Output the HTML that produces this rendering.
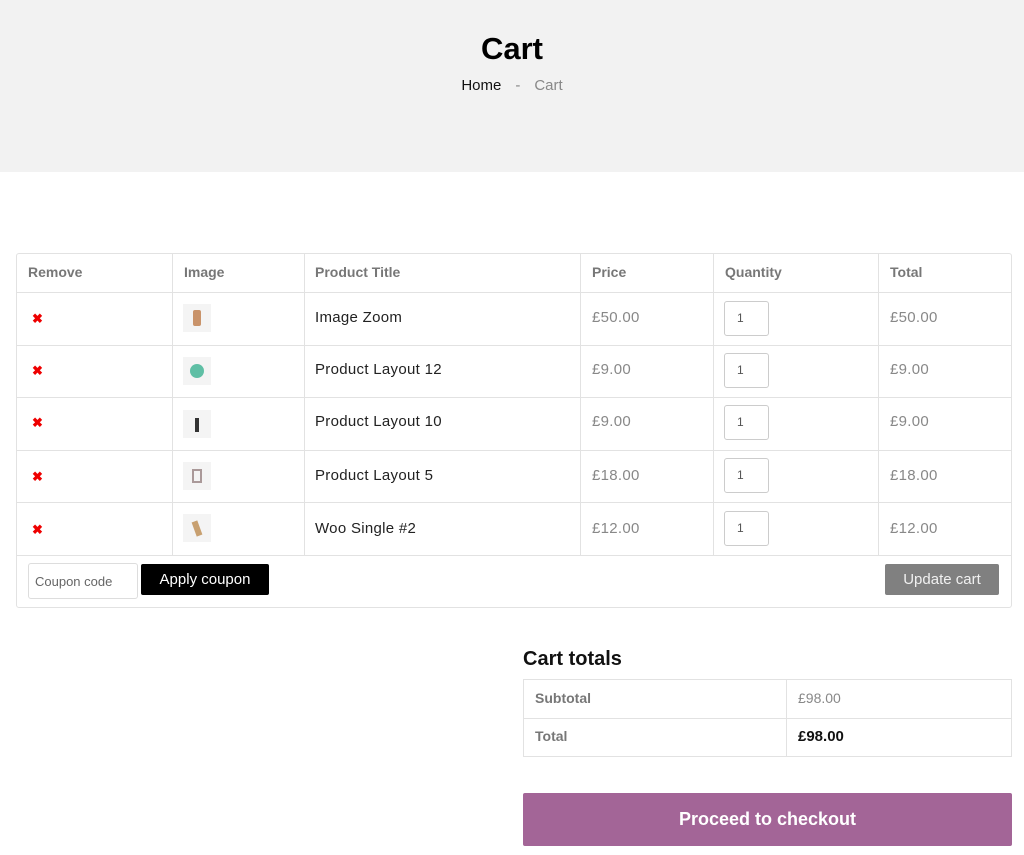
<!DOCTYPE html>
<html><head><style>
*{box-sizing:border-box;margin:0;padding:0}
body{width:1024px;height:855px;background:#fff;font-family:"Liberation Sans",sans-serif;color:#111;position:relative;overflow:hidden}
.hero{position:absolute;left:0;top:0;width:1024px;height:172px;background:#f2f2f2;text-align:center}
.hero h1{position:absolute;top:31px;width:100%;font-size:31px;font-weight:bold;color:#000}
.bc{position:absolute;top:77px;width:100%;font-size:15px}
.bc .s{color:#888;margin:0 14px}
.bc .c{color:#888}
.a{position:absolute}
.tbl{left:16px;top:253px;width:996px;height:355px;border:1px solid #e2e2e2;border-radius:3px}
.hl{position:absolute;height:1px;background:#e2e2e2}
.vl{position:absolute;width:1px;background:#e2e2e2}
.th{position:absolute;font-size:14px;font-weight:bold;color:#777;top:264px}
.td{position:absolute;font-size:15px;color:#222;letter-spacing:0.3px}
.g{color:#888}
.x{position:absolute;color:#e00;font-weight:bold;font-size:13px;left:32px}
.img{position:absolute;left:183px;width:28px;height:28px;background:#f4f4f4}
.q{position:absolute;left:724px;width:45px;height:35px;border:1px solid #ccc;border-radius:3px;font-size:12px;padding:9px 0 0 12px;color:#555}
</style></head><body>
<div class="hero"><h1>Cart</h1><div class="bc"><span>Home</span><span class="s">-</span><span class="c">Cart</span></div></div>

<div class="a tbl"></div>
<div class="hl" style="left:16px;width:996px;top:292px"></div>
<div class="hl" style="left:16px;width:996px;top:345px"></div>
<div class="hl" style="left:16px;width:996px;top:397px"></div>
<div class="hl" style="left:16px;width:996px;top:450px"></div>
<div class="hl" style="left:16px;width:996px;top:502px"></div>
<div class="hl" style="left:16px;width:996px;top:555px"></div>
<div class="vl" style="left:172px;top:253px;height:302px"></div>
<div class="vl" style="left:304px;top:253px;height:302px"></div>
<div class="vl" style="left:580px;top:253px;height:302px"></div>
<div class="vl" style="left:713px;top:253px;height:302px"></div>
<div class="vl" style="left:878px;top:253px;height:302px"></div>

<div class="th" style="left:28px">Remove</div>
<div class="th" style="left:184px">Image</div>
<div class="th" style="left:315px">Product Title</div>
<div class="th" style="left:592px">Price</div>
<div class="th" style="left:725px">Quantity</div>
<div class="th" style="left:890px">Total</div>

<div class="x" style="top:311px">✖</div><div class="img" style="top:304px"><div style="margin:6px 10px;width:8px;height:16px;background:#c9936a;border-radius:2px"></div></div>
<div class="td" style="left:315px;top:309px">Image Zoom</div><div class="td g" style="left:592px;top:309px">£50.00</div><div class="q" style="top:301px">1</div><div class="td g" style="left:890px;top:309px">£50.00</div>

<div class="x" style="top:363px">✖</div><div class="img" style="top:357px"><div style="margin:7px;width:14px;height:14px;background:#5fbfa5;border-radius:50%"></div></div>
<div class="td" style="left:315px;top:361px">Product Layout 12</div><div class="td g" style="left:592px;top:361px">£9.00</div><div class="q" style="top:353px">1</div><div class="td g" style="left:890px;top:361px">£9.00</div>

<div class="x" style="top:415px">✖</div><div class="img" style="top:410px"><div style="margin:8px 12px;width:4px;height:14px;background:#333"></div></div>
<div class="td" style="left:315px;top:413px">Product Layout 10</div><div class="td g" style="left:592px;top:413px">£9.00</div><div class="q" style="top:405px">1</div><div class="td g" style="left:890px;top:413px">£9.00</div>

<div class="x" style="top:469px">✖</div><div class="img" style="top:462px"><div style="margin:7px 9px;width:10px;height:14px;border:2px solid #a99"></div></div>
<div class="td" style="left:315px;top:467px">Product Layout 5</div><div class="td g" style="left:592px;top:467px">£18.00</div><div class="q" style="top:458px">1</div><div class="td g" style="left:890px;top:467px">£18.00</div>

<div class="x" style="top:522px">✖</div><div class="img" style="top:514px"><div style="margin:7px 11px;width:6px;height:15px;background:#c8a070;transform:rotate(-20deg)"></div></div>
<div class="td" style="left:315px;top:520px">Woo Single #2</div><div class="td g" style="left:592px;top:520px">£12.00</div><div class="q" style="top:511px">1</div><div class="td g" style="left:890px;top:520px">£12.00</div>

<div class="a" style="left:28px;top:563px;width:110px;height:36px;border:1px solid #ddd;border-radius:3px;font-size:13px;color:#666;padding:10px 0 0 6px">Coupon code</div>
<div class="a" style="left:141px;top:564px;width:128px;height:31px;background:#000;color:#fff;border-radius:2px;font-size:15px;text-align:center;padding-top:7px">Apply coupon</div>
<div class="a" style="left:885px;top:564px;width:114px;height:31px;background:#808080;color:#f0f0f0;border-radius:2px;font-size:15px;text-align:center;padding-top:7px">Update cart</div>

<div class="a" style="left:523px;top:648px;font-size:20px;font-weight:bold;color:#111">Cart totals</div>
<div class="a" style="left:523px;top:679px;width:489px;height:78px;border:1px solid #e2e2e2"></div>
<div class="hl" style="left:523px;width:489px;top:718px"></div>
<div class="vl" style="left:786px;top:679px;height:78px"></div>
<div class="a" style="left:535px;top:690px;font-size:14px;font-weight:bold;color:#777">Subtotal</div>
<div class="a" style="left:798px;top:690px;font-size:14px;color:#888">£98.00</div>
<div class="a" style="left:535px;top:728px;font-size:14px;font-weight:bold;color:#777">Total</div>
<div class="a" style="left:798px;top:728px;font-size:15px;font-weight:bold;color:#111">£98.00</div>

<div class="a" style="left:523px;top:793px;width:489px;height:53px;background:#a36597;color:#fff;font-size:18px;font-weight:bold;text-align:center;padding-top:16px;border-radius:2px">Proceed to checkout</div>
</body></html>
